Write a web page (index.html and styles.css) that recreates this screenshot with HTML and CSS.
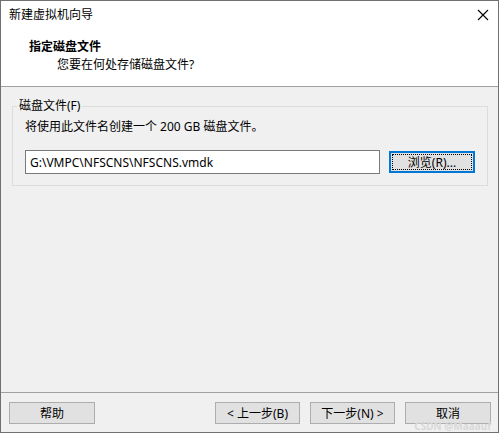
FILE: index.html
```html
<!DOCTYPE html>
<html lang="zh-CN">
<head>
    <meta charset="UTF-8">
    <title>新建虚拟机向导</title>
    <link rel="stylesheet" href="styles.css">
</head>
<body>
    <div class="window">
        <div class="titlebar">
            <span class="title">新建虚拟机向导</span>
            <span class="close">
                <svg width="12" height="12" viewBox="0 0 12 12">
                    <path d="M1 1 L11 11 M11 1 L1 11" stroke="#000" stroke-width="1.1" fill="none"/>
                </svg>
            </span>
        </div>
        <div class="header">
            <div class="head-title">指定磁盘文件</div>
            <div class="head-sub">您要在何处存储磁盘文件?</div>
        </div>
        <div class="content">
            <fieldset class="group">
                <legend>磁盘文件(F)</legend>
                <p class="info">将使用此文件名创建一个 200 GB 磁盘文件。</p>
                <div class="file-row">
                    <input class="path" type="text" value="G:\VMPC\NFSCNS\NFSCNS.vmdk">
                    <button class="btn browse"><span class="focus">浏览(R)...</span></button>
                </div>
            </fieldset>
        </div>
        <div class="footer">
            <button class="btn">帮助</button>
            <div class="nav">
                <button class="btn">&lt; 上一步(B)</button>
                <button class="btn">下一步(N) &gt;</button>
                <button class="btn cancel">取消</button>
            </div>
            <span class="mark">CSDN @Maaauf</span>
        </div>
    </div>
</body>
</html>
```

FILE: styles.css
```css
body {
    margin: 0;
    font-family: "Noto Sans", "Noto Sans CJK SC", sans-serif;
    font-size: 12px;
    color: #000;
}

.window {
    width: 499px;
    height: 433px;
    box-sizing: border-box;
    border: 1px solid #707070;
    display: flex;
    flex-direction: column;
    background-color: #f0f0f0;
    position: relative;
}

.titlebar {
    height: 27px;
    background-color: #fff;
    display: flex;
    align-items: center;
    justify-content: space-between;
    padding: 0 9px 0 8px;
}

.title {
    line-height: 16px;
}

.close svg {
    display: block;
}

.header {
    height: 59px;
    background-color: #fff;
    border-bottom: 1px solid #a0a0a0;
    padding-left: 28px;
    box-sizing: border-box;
    padding-top: 10px;
}

.head-title {
    font-weight: bold;
    line-height: 17px;
}

.head-sub {
    padding-left: 28px;
    line-height: 17px;
    margin-top: 1px;
}

.content {
    flex: 1;
    padding: 11px 10px 0 11px;
}

.group {
    margin: 0;
    border: 1px solid #dcdcdc;
    padding: 0 12px 11px 12px;
}

.group legend {
    padding: 0 2px;
    margin-left: -8px;
    line-height: 16px;
}

.info {
    margin: 5px 0 0 0;
    line-height: 16px;
}

.file-row {
    display: flex;
    align-items: center;
    gap: 9px;
    margin-top: 15px;
}

.path {
    width: 355px;
    height: 24px;
    box-sizing: border-box;
    border: 1px solid #7a7a7a;
    padding: 0 4px;
    font-family: "Noto Sans", "Noto Sans CJK SC", sans-serif;
    font-size: 12px;
    margin: 0;
    background-color: #fff;
}

.btn {
    width: 86px;
    height: 22px;
    box-sizing: border-box;
    border: 1px solid #adadad;
    background-color: #e1e1e1;
    font-family: "Noto Sans", "Noto Sans CJK SC", sans-serif;
    font-size: 12px;
    color: #000;
    padding: 0;
    margin: 0;
}

.browse {
    border: 2px solid #0078d7;
    padding: 1px;
}

.browse .focus {
    display: flex;
    align-items: center;
    justify-content: center;
    height: 100%;
    box-sizing: border-box;
    border: 1px dotted #000;
}

.footer {
    border-top: 1px solid #a0a0a0;
    height: 40px;
    box-sizing: border-box;
    display: flex;
    justify-content: space-between;
    padding: 9px 7px 0 8px;
}

.nav {
    display: flex;
    gap: 10px;
}

.nav .btn {
    width: 85px;
}

.nav .cancel {
    width: 86px;
}

.mark {
    position: absolute;
    right: 7px;
    bottom: 1px;
    font-size: 10px;
    line-height: 10px;
    color: #d8d8d8;
    font-weight: bold;
}
```
